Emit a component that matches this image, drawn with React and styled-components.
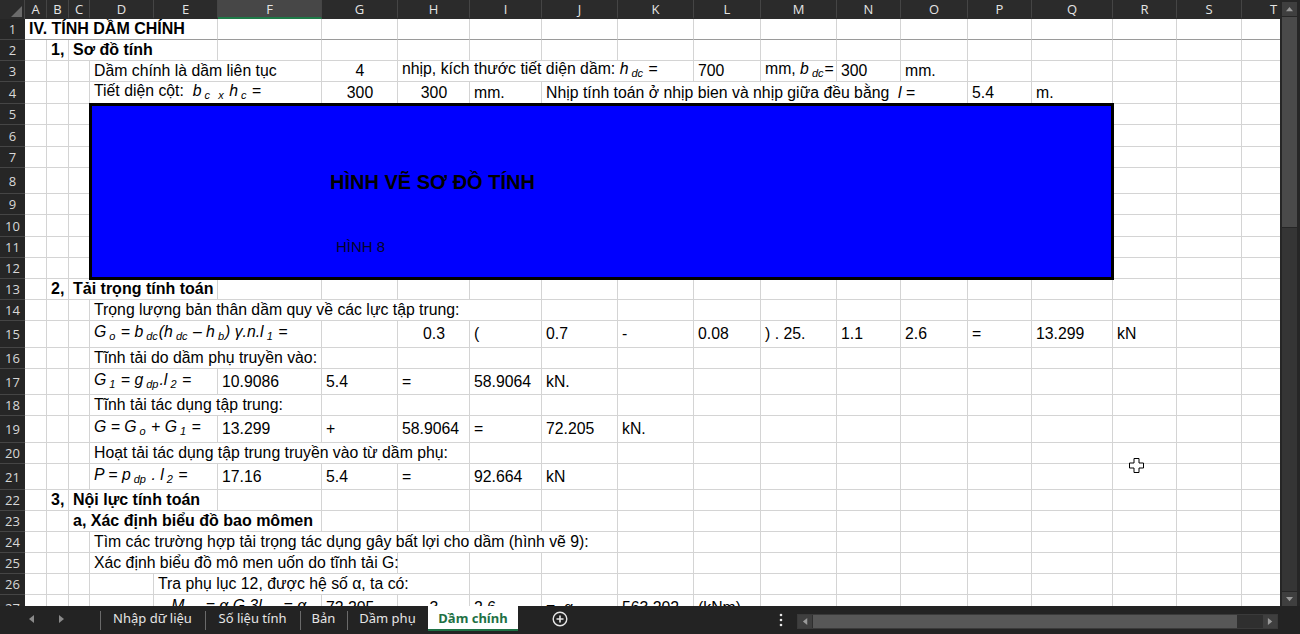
import React from 'react';
import styled, { createGlobalStyle } from 'styled-components';

const GlobalStyle = createGlobalStyle`
  html, body {
    margin: 0;
    padding: 0;
    background: #232323;
  }
  body {
    overflow: hidden;
  }
`;

// Column letters and pixel widths as Excel draws them at this zoom
const COLS = ['A', 'B', 'C', 'D', 'E', 'F', 'G', 'H', 'I', 'J', 'K', 'L', 'M', 'N', 'O', 'P', 'Q', 'R', 'S', 'T'];
const WIDTHS = [22, 22, 21, 64, 64, 104, 76, 72, 72, 76, 76, 67, 76, 64, 67, 64, 81, 64, 65, 64];
const HEIGHTS = [21, 21, 21, 22, 21, 22, 21, 26, 21, 22, 21, 21, 21, 21, 27, 21, 26, 21, 27, 21, 26, 21, 21, 21, 21, 21, 27];

const Frame = styled.div`
  width: 1300px;
  height: 634px;
  display: flex;
  flex-direction: column;
  background: #232323;
  font-family: "Liberation Sans", Arial, sans-serif;
`;

const Main = styled.div`
  display: flex;
  height: 606px;
  overflow: hidden;
`;

const Viewport = styled.div`
  position: relative;
  width: 1280px;
  height: 606px;
  overflow: hidden;
  background: #fff;
`;

const Sheet = styled.div`
  display: grid;
  grid-template-columns: 25px ${WIDTHS.map((w) => `${w}px`).join(' ')};
  grid-template-rows: 19px ${HEIGHTS.map((h) => `${h}px`).join(' ')};
  width: max-content;
  font-size: 15.8px;
  color: #000;
`;

const Corner = styled.div`
  background: #2b2b2b;
  border-right: 1px solid #454545;
  display: flex;
  align-items: flex-end;
  justify-content: flex-end;
  padding: 0 2px 2px 0;
  box-sizing: border-box;
`;

const ColHead = styled.div`
  background: ${(p) => (p.$active ? '#474747' : '#2b2b2b')};
  color: #e4e4e4;
  font-family: "Open Sans", "Noto Sans", sans-serif;
  font-size: 13px;
  display: flex;
  align-items: center;
  justify-content: center;
  border-right: 1px solid #454545;
  border-bottom: 2px solid ${(p) => (p.$active ? '#1f7a48' : '#2b2b2b')};
  box-sizing: border-box;
  padding-top: 1px;
`;

const RowHead = styled.div`
  background: #262626;
  color: #d8d8d8;
  font-family: "Open Sans", "Noto Sans", sans-serif;
  font-size: 13px;
  display: flex;
  align-items: center;
  justify-content: center;
  border-bottom: 1px solid #454545;
  box-sizing: border-box;
`;

const Cell = styled.div`
  grid-column: span ${(p) => p.$span || 1};
  border-right: 1px solid #d4d4d4;
  border-bottom: 1px solid ${(p) => (p.$rule ? '#9a9a9a' : '#d4d4d4')};
  box-sizing: border-box;
  display: flex;
  align-items: center;
  justify-content: ${(p) => (p.$align === 'center' ? 'center' : 'flex-start')};
  padding: 0 3px 0 4px;
  font-weight: ${(p) => (p.$bold ? 700 : 400)};
  font-size: ${(p) => (p.$bold ? '16px' : 'inherit')};
  line-height: 18px;
  white-space: nowrap;
  min-width: 0;
`;

const CellText = styled.span`
  white-space: pre;
`;

const Math = styled.span`
  font-style: italic;
`;

const Sub = styled.span`
  font-size: 11px;
  vertical-align: -3px;
  margin: 0 1px 0 3px;
`;

const Shape = styled.div`
  grid-row: 6 / span 8;
  grid-column: 5 / span 14;
  margin: -1px;
  z-index: 1;
  background: #0000ff;
  border: 3px solid #000;
  display: flex;
  flex-direction: column;
  align-items: flex-start;
  padding: 64px 0 0 238px;
`;

const ShapeTitle = styled.div`
  font-size: 20px;
  font-weight: 700;
  line-height: 24px;
  color: #000;
`;

const ShapeCaption = styled.div`
  font-size: 15px;
  line-height: 18px;
  margin: 44px 0 0 6px;
  color: #05052a;
`;

const Pointer = styled.svg`
  position: absolute;
  left: 1129px;
  top: 458px;
  z-index: 2;
`;

const VScroll = styled.div`
  width: 20px;
  background: #262626;
  display: flex;
  flex-direction: column;
  padding: 2px 3px 0 2px;
  box-sizing: border-box;
`;

const ScrollBtn = styled.div`
  height: 14px;
  flex: none;
  background: #3f3f3f;
  display: flex;
  align-items: center;
  justify-content: center;
`;

const VThumb = styled.div`
  height: 210px;
  background: #4a4a4a;
  margin: 1px 0;
`;

const VTrack = styled.div`
  flex: 1;
  background: #353535;
  margin-bottom: 1px;
`;

const TabBar = styled.div`
  height: 28px;
  display: flex;
  align-items: flex-start;
  background: #232323;
  font-family: "Noto Sans", "Open Sans", sans-serif;
  font-size: 13px;
  color: #e6e6e6;
`;

const NavArea = styled.div`
  width: 100px;
  height: 25px;
  display: flex;
  align-items: center;
  gap: 22px;
  padding-left: 28px;
  box-sizing: border-box;
`;

const Tab = styled.div`
  position: relative;
  width: ${(p) => p.$w}px;
  height: 25px;
  display: flex;
  align-items: center;
  justify-content: center;
  box-sizing: border-box;
  background: ${(p) => (p.$active ? '#fff' : 'transparent')};
  color: ${(p) => (p.$active ? '#1e7145' : '#e6e6e6')};
  font-weight: ${(p) => (p.$active ? 700 : 400)};
  border-bottom: 2px solid ${(p) => (p.$active ? '#1e7145' : 'transparent')};
  white-space: nowrap;

  &::before {
    content: '';
    display: ${(p) => (p.$active ? 'none' : 'block')};
    position: absolute;
    left: 0;
    top: 5px;
    width: 1px;
    height: 19px;
    background: #6a6a6a;
  }
`;

const AddButton = styled.div`
  width: 84px;
  height: 25px;
  display: flex;
  align-items: center;
  justify-content: center;
`;

const Spacer = styled.div`
  flex: 1;
`;

const More = styled.div`
  width: 16px;
  height: 28px;
  margin-right: 8px;
  display: flex;
  align-items: center;
  justify-content: center;
`;

const HScroll = styled.div`
  width: 481px;
  height: 15px;
  margin: 8px 22px 0 0;
  display: flex;
  background: #2f2f2f;
  border: 1px solid #3a3a3a;
  box-sizing: border-box;
`;

const HBtn = styled.div`
  width: 14px;
  background: #3f3f3f;
  display: flex;
  align-items: center;
  justify-content: center;
`;

const HThumb = styled.div`
  width: 424px;
  margin: 0 1px;
  background: #575757;
`;

const HTrack = styled.div`
  flex: 1;
`;

const Tri = ({ dir, color = '#9a9a9a', size = 7 }) => {
  const pts = {
    up: '0,6 4,1 8,6',
    down: '0,1 4,6 8,1',
    left: '6,0 1,4 6,8',
    right: '1,0 6,4 1,8',
  }[dir];
  return (
    <svg width={size} height={size} viewBox="0 0 8 8">
      <polygon points={pts} fill={color} />
    </svg>
  );
};

const rows = [
  { rule: true, cells: [[0, 5, 'IV. TÍNH DẦM CHÍNH', { bold: true }]] },
  { cells: [[1, 1, '1,', { bold: true }], [2, 3, 'Sơ đồ tính', { bold: true }]] },
  {
    cells: [
      [3, 3, 'Dầm chính là dầm liên tục'],
      [6, 1, '4', { align: 'center' }],
      [7, 4, <>nhịp, kích thước tiết diện dầm: <Math>h</Math><Sub><Math>dc</Math></Sub> =</>],
      [11, 1, '700'],
      [12, 1, <>mm, <Math>b</Math><Sub><Math>dc</Math></Sub>=</>],
      [13, 1, '300'],
      [14, 1, 'mm.'],
    ],
  },
  {
    cells: [
      [3, 3, <>Tiết diện cột:  <Math>b</Math><Sub><Math>c</Math></Sub> <Sub><Math>x</Math></Sub> <Math>h</Math><Sub><Math>c</Math></Sub> =</>],
      [6, 1, '300', { align: 'center' }],
      [7, 1, '300', { align: 'center' }],
      [8, 1, 'mm.'],
      [9, 6, <>Nhịp tính toán ở nhịp bien và nhịp giữa đều bằng  <Math>l</Math> =</>],
      [15, 1, '5.4'],
      [16, 1, 'm.'],
    ],
  },
  { shape: true, cells: [] },
  { shape: true, cells: [] },
  { shape: true, cells: [] },
  { shape: true, cells: [] },
  { shape: true, cells: [] },
  { shape: true, cells: [] },
  { shape: true, cells: [] },
  { shape: true, cells: [] },
  { cells: [[1, 1, '2,', { bold: true }], [2, 3, 'Tải trọng tính toán', { bold: true }]] },
  { cells: [[3, 6, 'Trọng lượng bản thân dầm quy về các lực tập trung:']] },
  {
    cells: [
      [3, 3, <Math>G<Sub>o</Sub> = b<Sub>dc</Sub>(h<Sub>dc</Sub> – h<Sub>b</Sub>) γ.n.l<Sub>1</Sub> =</Math>],
      [7, 1, '0.3', { align: 'center' }],
      [8, 1, '('],
      [9, 1, '0.7'],
      [10, 1, '-'],
      [11, 1, '0.08'],
      [12, 1, ') . 25.'],
      [13, 1, '1.1'],
      [14, 1, '2.6'],
      [15, 1, '='],
      [16, 1, '13.299'],
      [17, 1, 'kN'],
    ],
  },
  { cells: [[3, 3, 'Tĩnh tải do dầm phụ truyền vào:']] },
  {
    cells: [
      [3, 2, <Math>G<Sub>1</Sub> = g<Sub>dp</Sub>.l<Sub>2</Sub> =</Math>],
      [5, 1, '10.9086'],
      [6, 1, '5.4'],
      [7, 1, '='],
      [8, 1, '58.9064'],
      [9, 1, 'kN.'],
    ],
  },
  { cells: [[3, 3, 'Tĩnh tải tác dụng tập trung:']] },
  {
    cells: [
      [3, 2, <Math>G = G<Sub>o</Sub> + G<Sub>1</Sub> =</Math>],
      [5, 1, '13.299'],
      [6, 1, '+'],
      [7, 1, '58.9064'],
      [8, 1, '='],
      [9, 1, '72.205'],
      [10, 1, 'kN.'],
    ],
  },
  { cells: [[3, 5, 'Hoạt tải tác dụng tập trung truyền vào từ dầm phụ:']] },
  {
    cells: [
      [3, 2, <Math>P = p<Sub>dp</Sub> . l<Sub>2</Sub> =</Math>],
      [5, 1, '17.16'],
      [6, 1, '5.4'],
      [7, 1, '='],
      [8, 1, '92.664'],
      [9, 1, 'kN'],
    ],
  },
  { cells: [[1, 1, '3,', { bold: true }], [2, 3, 'Nội lực tính toán', { bold: true }]] },
  { cells: [[2, 4, 'a, Xác định biểu đồ bao mômen', { bold: true }]] },
  { cells: [[3, 7, 'Tìm các trường hợp tải trọng tác dụng gây bất lợi cho dầm (hình vẽ 9):']] },
  { cells: [[3, 4, 'Xác định biểu đồ mô men uốn do tĩnh tải G:']] },
  { cells: [[4, 4, 'Tra phụ lục 12, được hệ số α, ta có:']] },
  {
    cells: [
      [4, 2, <Math>   M<Sub>G</Sub>  = α.G.3l     = α</Math>],
      [6, 1, '72.205'],
      [7, 1, '3', { align: 'center' }],
      [8, 1, '2.6'],
      [9, 1, '=  α'],
      [10, 1, '563.202'],
      [11, 1, '(kNm)'],
    ],
  },
];

const renderRow = (row, r) => {
  const out = [<RowHead key={`h${r}`}>{r + 1}</RowHead>];
  const byCol = {};
  row.cells.forEach((c) => {
    byCol[c[0]] = c;
  });
  let c = 0;
  while (c < COLS.length) {
    if (row.shape && c >= 3 && c <= 16) {
      c = 17;
      continue;
    }
    const def = byCol[c];
    if (def) {
      const [, span, content, opts = {}] = def;
      out.push(
        <Cell key={`${r}-${c}`} $span={span} $rule={row.rule} $align={opts.align} $bold={opts.bold}>
          <CellText>{content}</CellText>
        </Cell>
      );
      c += span;
    } else {
      out.push(<Cell key={`${r}-${c}`} $rule={row.rule} />);
      c += 1;
    }
  }
  return out;
};

const tabs = [
  { name: 'Nhập dữ liệu', w: 105 },
  { name: 'Số liệu tính', w: 95 },
  { name: 'Bản', w: 47 },
  { name: 'Dầm phụ', w: 81 },
  { name: 'Dầm chính', w: 90, active: true },
];

const App = () => {
  return (
    <Frame>
      <GlobalStyle />
      <Main>
        <Viewport>
          <Sheet>
            <Corner>
              <svg width="11" height="11" viewBox="0 0 11 11">
                <polygon points="11,0 11,11 0,11" fill="#6b6b6b" />
              </svg>
            </Corner>
            {COLS.map((col) => (
              <ColHead key={col} $active={col === 'F'}>
                {col}
              </ColHead>
            ))}
            {rows.map((row, r) => renderRow(row, r))}
            <Shape>
              <ShapeTitle>HÌNH VẼ SƠ ĐỒ TÍNH</ShapeTitle>
              <ShapeCaption>HÌNH 8</ShapeCaption>
            </Shape>
          </Sheet>
          <Pointer width="15" height="15" viewBox="0 0 15 15">
            <path
              d="M5 0.5 H10 V5 H14.5 V10 H10 V14.5 H5 V10 H0.5 V5 H5 Z"
              fill="#fff"
              stroke="#000"
              strokeWidth="1"
            />
          </Pointer>
        </Viewport>
        <VScroll>
          <ScrollBtn>
            <Tri dir="up" />
          </ScrollBtn>
          <VThumb />
          <VTrack />
          <ScrollBtn>
            <Tri dir="down" />
          </ScrollBtn>
        </VScroll>
      </Main>
      <TabBar>
        <NavArea>
          <Tri dir="left" color="#8a8a8a" size={8} />
          <Tri dir="right" color="#8a8a8a" size={8} />
        </NavArea>
        {tabs.map((t) => (
          <Tab key={t.name} $w={t.w} $active={t.active}>
            {t.name}
          </Tab>
        ))}
        <AddButton>
          <svg width="16" height="16" viewBox="0 0 16 16">
            <circle cx="8" cy="8" r="6.8" fill="none" stroke="#e6e6e6" strokeWidth="1.4" />
            <path d="M8 4.5 V11.5 M4.5 8 H11.5" stroke="#e6e6e6" strokeWidth="1.6" />
          </svg>
        </AddButton>
        <Spacer />
        <More>
          <svg width="4" height="14" viewBox="0 0 4 14">
            <circle cx="2" cy="2" r="1.3" fill="#e6e6e6" />
            <circle cx="2" cy="7" r="1.3" fill="#e6e6e6" />
            <circle cx="2" cy="12" r="1.3" fill="#e6e6e6" />
          </svg>
        </More>
        <HScroll>
          <HBtn>
            <Tri dir="left" />
          </HBtn>
          <HThumb />
          <HTrack />
          <HBtn>
            <Tri dir="right" />
          </HBtn>
        </HScroll>
      </TabBar>
    </Frame>
  );
};

export default App;
